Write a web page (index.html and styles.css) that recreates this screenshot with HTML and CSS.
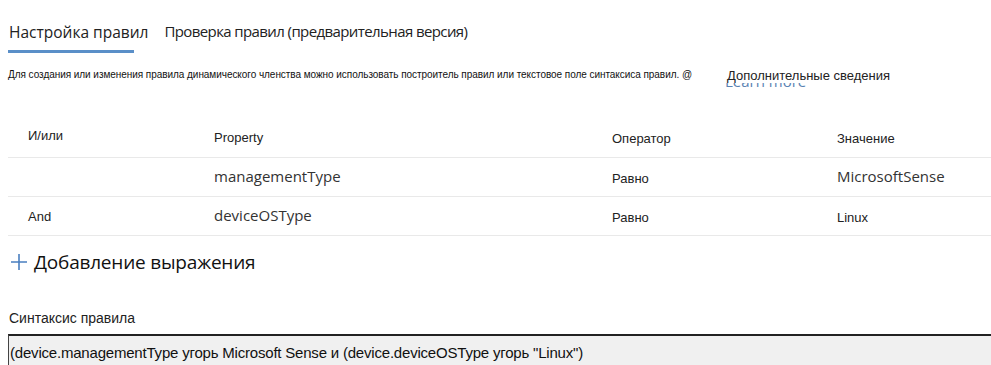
FILE: index.html
```html
<!DOCTYPE html>
<html lang="ru">
<head>
  <meta charset="UTF-8">
  <meta name="viewport" content="width=device-width, initial-scale=1.0">
  <title>Правила динамического членства</title>
  <link rel="stylesheet" href="styles.css">
</head>
<body>
  <div class="page">
    <!-- Tabs -->
    <div class="tabs">
      <div class="tab active">Настройка правил</div>
      <div class="tab">Проверка правил (предварительная версия)</div>
    </div>

    <!-- Description -->
    <div class="intro">
      <p class="intro-text">Для создания или изменения правила динамического членства можно использовать построитель правил или текстовое поле синтаксиса правил. @</p>
      <div class="more">
        <a class="learn-more" href="#">Learn more</a>
        <span class="more-label">Дополнительные сведения</span>
      </div>
    </div>

    <!-- Rules table -->
    <div class="rules">
      <div class="row head">
        <div class="cell c-andor">И/или</div>
        <div class="cell c-prop">Property</div>
        <div class="cell c-op">Оператор</div>
        <div class="cell c-val">Значение</div>
      </div>
      <div class="row">
        <div class="cell c-andor"></div>
        <div class="cell c-prop big">managementType</div>
        <div class="cell c-op">Равно</div>
        <div class="cell c-val big">MicrosoftSense</div>
      </div>
      <div class="row">
        <div class="cell c-andor">And</div>
        <div class="cell c-prop big">deviceOSType</div>
        <div class="cell c-op">Равно</div>
        <div class="cell c-val">Linux</div>
      </div>
    </div>

    <button class="add-expr">
      <svg class="plus" width="18" height="18" viewBox="0 0 18 18">
        <path d="M9 1v16M1 9h16" stroke="#4a7fc0" stroke-width="1.6" fill="none"/>
      </svg>
      <span>Добавление выражения</span>
    </button>

    <!-- Rule syntax -->
    <div class="syntax">
      <div class="syntax-label">Синтаксис правила</div>
      <div class="syntax-box">(device.managementType угорь Microsoft Sense и (device.deviceOSType угорь "Linux")</div>
    </div>
  </div>
</body>
</html>
```

FILE: styles.css
```css
body {
  margin: 0;
  background-color: #fff;
  color: #222;
  font-family: "Liberation Sans", Arial, sans-serif;
}

.page {
  padding: 0 0 0 8px;
}

.tabs {
  display: flex;
  gap: 14px;
  padding-top: 21px;
}

.tab {
  position: relative;
  font-family: "Open Sans", sans-serif;
  font-size: 15px;
  letter-spacing: -0.6px;
  color: #222;
  padding: 0 1px 10px 1px;
}

.tab.active {
  font-size: 15.5px;
  letter-spacing: 0;
}

.tab.active::after {
  content: "";
  position: absolute;
  left: 0;
  bottom: 0;
  width: 126px;
  height: 3px;
  background-color: #5a8fc8;
}

.intro {
  display: flex;
  align-items: flex-start;
  margin-top: 16px;
  height: 30px;
}

.intro-text {
  margin: 0;
  font-size: 10px;
  letter-spacing: -0.05px;
  color: #111;
  width: 718px;
}

.more {
  position: relative;
  margin-top: -1px;
}

.learn-more {
  position: absolute;
  left: -1px;
  top: 3px;
  font-family: "Open Sans", sans-serif;
  font-size: 15px;
  color: #5b83b3;
  text-decoration: none;
  white-space: nowrap;
}

.more-label {
  position: relative;
  display: block;
  background-color: #fff;
  height: 15px;
  padding-left: 1px;
  font-size: 13px;
  color: #222;
  white-space: nowrap;
}

.rules {
  margin-top: 12px;
}

.row {
  display: flex;
  align-items: center;
  height: 38px;
  border-bottom: 1.5px solid #e9e9e9;
  font-size: 13px;
  color: #222;
}

.row.head {
  height: 40px;
  padding-top: 6px;
}

.row.head .c-andor {
  margin-top: -3px;
}

.cell.c-andor {
  width: 186px;
  padding-left: 20px;
}

.cell.c-prop {
  width: 398px;
}

.cell.c-op {
  width: 225px;
}

.cell.c-op,
.cell.c-val {
  margin-top: 2px;
}

.cell.big {
  font-family: "Open Sans", sans-serif;
  font-size: 15px;
  color: #333;
  margin-top: -3px;
}

.add-expr {
  display: flex;
  align-items: center;
  gap: 6px;
  border: none;
  background: none;
  padding: 13px 0 0 2px;
  font-family: "Open Sans", sans-serif;
  font-size: 19px;
  letter-spacing: -0.2px;
  color: #111;
  cursor: pointer;
}

.syntax {
  margin-top: 35px;
}

.syntax-label {
  font-size: 14px;
  color: #222;
  padding-left: 1px;
  margin-bottom: 8px;
}

.syntax-box {
  background-color: #f0f0f0;
  border-top: 2px solid #222;
  border-left: 1px solid #444;
  padding: 8px 0 14px 1px;
  font-size: 15px;
  color: #111;
  letter-spacing: -0.2px;
}
```
